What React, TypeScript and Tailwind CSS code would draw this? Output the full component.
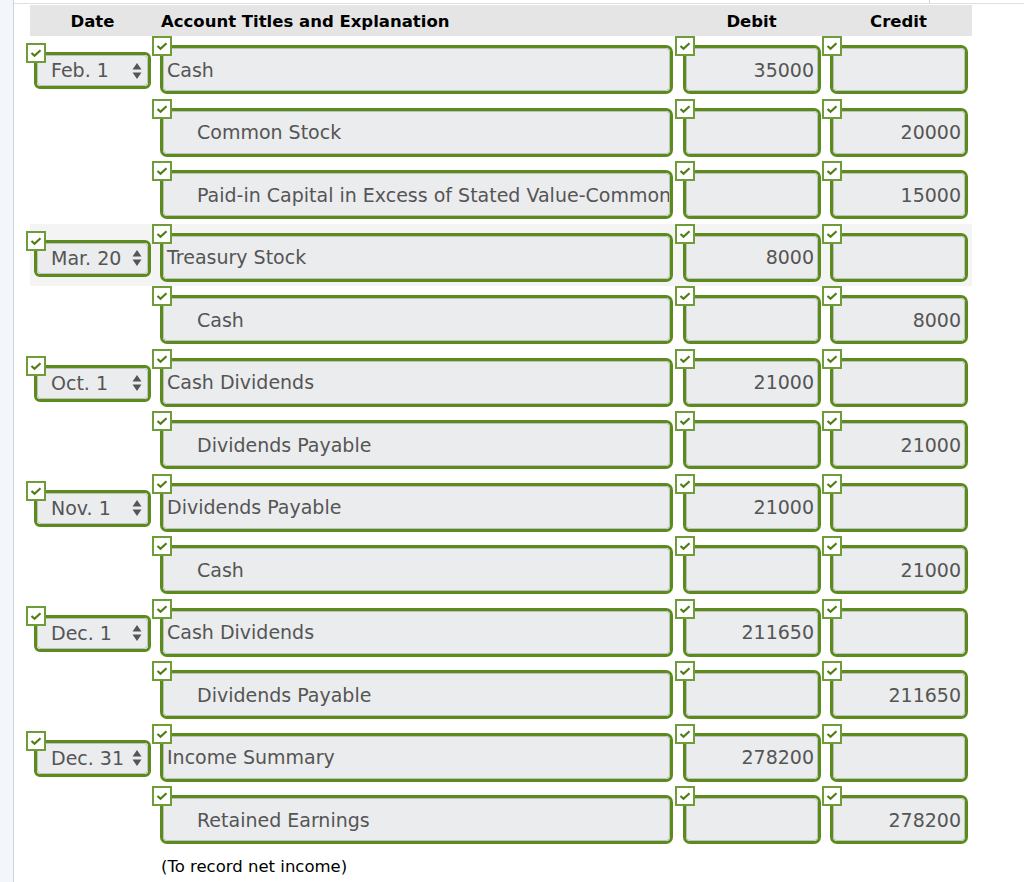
import React from "react";

type Row = {
  date?: string;
  account: string;
  indent?: boolean;
  debit?: string;
  credit?: string;
  shaded?: boolean;
};

const rows: Row[] = [
  { date: "Feb. 1", account: "Cash", debit: "35000" },
  { account: "Common Stock", indent: true, credit: "20000" },
  { account: "Paid-in Capital in Excess of Stated Value-Common Stock", indent: true, credit: "15000" },
  { date: "Mar. 20", account: "Treasury Stock", debit: "8000", shaded: true },
  { account: "Cash", indent: true, credit: "8000" },
  { date: "Oct. 1", account: "Cash Dividends", debit: "21000" },
  { account: "Dividends Payable", indent: true, credit: "21000" },
  { date: "Nov. 1", account: "Dividends Payable", debit: "21000" },
  { account: "Cash", indent: true, credit: "21000" },
  { date: "Dec. 1", account: "Cash Dividends", debit: "211650" },
  { account: "Dividends Payable", indent: true, credit: "211650" },
  { date: "Dec. 31", account: "Income Summary", debit: "278200" },
  { account: "Retained Earnings", indent: true, credit: "278200" },
];

function Check() {
  return (
    <div className="absolute left-[-11px] top-[-12px] z-10 flex h-[20px] w-[20px] items-center justify-center border-2 border-[#6e9c38] bg-white">
      <svg width="12" height="10" viewBox="0 0 12 10">
        <path d="M1.5 5 L4.5 7.8 L10.5 2.2" fill="none" stroke="#4f7f14" strokeWidth="2.2" />
      </svg>
    </div>
  );
}

function Field({
  value,
  width,
  align,
  indent,
}: {
  value?: string;
  width: string;
  align: "left" | "right";
  indent?: boolean;
}) {
  return (
    <div className={`relative h-[49px] ${width} rounded-[7px] border-[3px] border-[#5b8b1b] bg-white`}>
      <Check />
      <div
        className={`flex h-full w-full items-center overflow-hidden whitespace-nowrap rounded-[4px] border border-[#bfc0c2] bg-[#ebecee] pt-[1px] text-[19px] text-[#555] ${
          align === "right" ? "justify-end pr-[3px]" : indent ? "pl-[33px]" : "pl-[3px]"
        }`}
      >
        {value}
      </div>
    </div>
  );
}

function DateSelect({ value }: { value: string }) {
  return (
    <div className="relative mt-[7px] h-[37px] w-[117px] rounded-[6px] border-[3px] border-[#5b8b1b] bg-white">
      <Check />
      <div className="flex h-full w-full items-center justify-between rounded-[4px] border border-[#bfc0c2] bg-[#ebecee] pl-[13px] pr-[5px] text-[19px] text-[#555]">
        <span>{value}</span>
        <svg width="10" height="18" viewBox="0 0 10 18">
          <path d="M5 1 L9.5 7.5 L0.5 7.5 Z" fill="#555" />
          <path d="M0.5 10.5 L9.5 10.5 L5 17 Z" fill="#555" />
        </svg>
      </div>
    </div>
  );
}

export default function App() {
  return (
    <div
      className="flex min-h-[882px] w-[1024px] bg-white"
      style={{ fontFamily: '"DejaVu Sans", Verdana, sans-serif' }}
    >
      <div className="w-[13px] shrink-0 bg-[#f3f6fa]" />
      <div className="flex-1 border-l border-[#cdd5df]">
        <div className="h-[4px] border-b border-[#dde1e6]">
          <div className="h-full w-[916px] border-r border-[#cdd5df]" />
        </div>
        <div className="ml-[16px] mt-[1px] w-[942px]">
          <div className="flex h-[31px] items-center bg-[#e5e5e5] pt-[3px] text-[16.5px] font-bold text-black">
            <div className="w-[125px] text-center">Date</div>
            <div className="w-[523px] pl-[6px]">Account Titles and Explanation</div>
            <div className="w-[147px] text-center">Debit</div>
            <div className="w-[147px] text-center">Credit</div>
          </div>
          {rows.map((r, i) => (
            <div
              key={i}
              className={`flex h-[62.5px] items-start pt-[9px] ${r.shaded ? "bg-[#f4f4f4]" : ""}`}
            >
              <div className="flex w-[125px] pl-[4px]">
                {r.date ? <DateSelect value={r.date} /> : null}
              </div>
              <div className="w-[523px] pl-[5px]">
                <Field value={r.account} width="w-[513px]" align="left" indent={r.indent} />
              </div>
              <div className="w-[147px] pl-[5px]">
                <Field value={r.debit} width="w-[138px]" align="right" />
              </div>
              <div className="w-[147px] pl-[5px]">
                <Field value={r.credit} width="w-[138px]" align="right" />
              </div>
            </div>
          ))}
          <div className="ml-[131px] mt-[6px] text-[16.5px] text-black">(To record net income)</div>
        </div>
      </div>
    </div>
  );
}
